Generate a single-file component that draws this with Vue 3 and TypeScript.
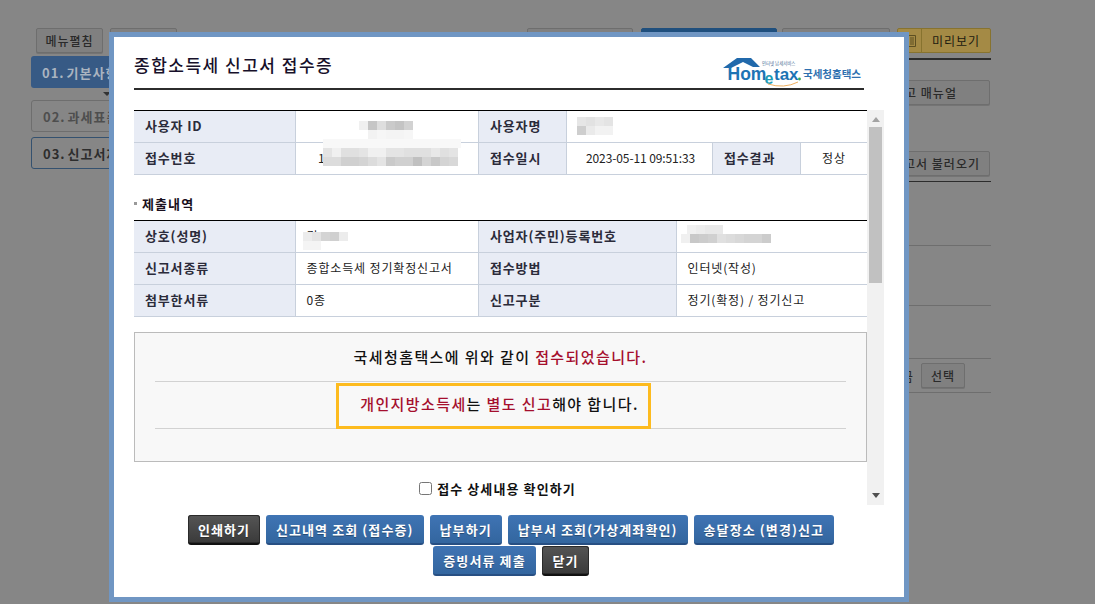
<template>
  <div class="page">
    <div class="backdrop">
      <aside class="side">
        <div class="side-top">
          <button class="ghost">메뉴펼침</button>
          <button class="ghost">메뉴닫기</button>
        </div>
        <div class="step current">01. 기본사항</div>
        <div class="step-arrow"></div>
        <div class="step muted">02. 과세표준</div>
        <div class="step outlined">03. 신고서제출</div>
      </aside>
      <section class="main">
        <div class="main-top">
          <button class="ghost top-a">저장하기</button>
          <button class="ghost top-b">신고서 제출하기</button>
          <button class="ghost top-c">임시저장</button>
          <button class="preview">
            <span class="preview-icon">
              <svg width="8" height="12" viewBox="0 0 8 12">
                <path d="M.5.5h7v11h-7z" fill="none" stroke="#5d4f22" />
                <path d="M2 3h4M2 5h4M2 7h4M2 9h4" stroke="#5d4f22" />
              </svg>
            </span>
            <span class="preview-label">미리보기</span>
          </button>
        </div>
        <div class="manual-row"><button class="ghost manual">신고 매뉴얼</button></div>
        <div class="load-row"><button class="ghost load">신고서 불러오기</button></div>
        <div class="plain-row r1"></div>
        <div class="plain-row r2"></div>
        <div class="plain-row r3"></div>
        <div class="select-row"><span class="select-text">세금</span><button class="ghost pick">선택</button></div>
      </section>
    </div>

    <div class="modal">
      <header class="modal-head">
        <h1>종합소득세 신고서 접수증</h1>
        <svg class="logo" width="140" height="32" viewBox="0 0 140 32">
          <path d="M1 11 L15 1 H29 L38 10 H31 L21 5 L9 11 Z" fill="#2169ab" />
          <text x="5.5" y="23" class="logo-home">Hom</text>
          <text x="42.5" y="27" class="logo-e">e</text>
          <text x="52" y="23" class="logo-tax">tax</text>
          <circle cx="77.5" cy="22" r="1.4" fill="#3aa655" />
          <path d="M46 27 Q62 32 76 25" fill="none" stroke="#efb060" stroke-width="1" />
          <text x="40" y="8" class="logo-tiny">인터넷 납세서비스</text>
          <text x="81" y="21" class="logo-kr">국세청홈택스</text>
        </svg>
      </header>

      <div class="scroll-wrap">
        <div class="scroll-body">
          <table class="info">
            <colgroup>
              <col style="width: 162px" /><col style="width: 183px" /><col style="width: 88px" />
              <col style="width: 146px" /><col style="width: 88px" /><col style="width: 66px" />
            </colgroup>
            <tbody>
              <tr>
                <th>사용자 ID</th>
                <td></td>
                <th>사용자명</th>
                <td colspan="3"></td>
              </tr>
              <tr>
                <th>접수번호</th>
                <td class="receipt">1</td>
                <th>접수일시</th>
                <td class="center date">2023-05-11 09:51:33</td>
                <th>접수결과</th>
                <td class="center">정상</td>
              </tr>
            </tbody>
          </table>

          <h2 class="section-title"><i></i>제출내역</h2>

          <table class="info">
            <colgroup>
              <col style="width: 162px" /><col style="width: 183px" /><col style="width: 198px" /><col style="width: 190px" />
            </colgroup>
            <tbody>
              <tr>
                <th>상호(성명)</th>
                <td>김</td>
                <th>사업자(주민)등록번호</th>
                <td></td>
              </tr>
              <tr>
                <th>신고서종류</th>
                <td>종합소득세 정기확정신고서</td>
                <th>접수방법</th>
                <td>인터넷(작성)</td>
              </tr>
              <tr>
                <th>첨부한서류</th>
                <td>0종</td>
                <th>신고구분</th>
                <td>정기(확정) / 정기신고</td>
              </tr>
            </tbody>
          </table>

          <div class="result">
            <p class="result-line first">국세청홈택스에 위와 같이&nbsp;<em>접수되었습니다.</em></p>
            <div class="result-line second">
              <p class="highlight"><em>개인지방소득세</em>는&nbsp;<em>별도 신고</em>해야 합니다.</p>
            </div>
          </div>

          <label class="detail-check">
            <input type="checkbox" />
            <span>접수 상세내용 확인하기</span>
          </label>
        </div>

        <div class="scrollbar">
          <span class="arrow up"></span>
          <span class="thumb"></span>
          <span class="arrow down"></span>
        </div>
      </div>

      <div class="actions">
        <div class="action-row">
          <button class="btn dark print">인쇄하기</button>
          <button class="btn">신고내역 조회 (접수증)</button>
          <button class="btn">납부하기</button>
          <button class="btn">납부서 조회(가상계좌확인)</button>
          <button class="btn">송달장소 (변경)신고</button>
        </div>
        <div class="action-row">
          <button class="btn evidence">증빙서류 제출</button>
          <button class="btn dark close">닫기</button>
        </div>
      </div>
    </div>

    <!-- personal data is pixelated in the source -->
    <div
      v-for="(m, i) in mosaics"
      :key="i"
      class="mosaic"
      :style="{ left: m.x + 'px', top: m.y + 'px' }"
    >
      <div v-for="(row, r) in m.rows" :key="r" class="mosaic-row" :style="{ marginLeft: (m.indent?.[r] ?? 0) + 'px' }">
        <span
          v-for="(c, k) in row"
          :key="k"
          :style="{ width: (m.w ?? 9) + 'px', height: '9px', background: '#' + c + c + c }"
        ></span>
      </div>
    </div>
  </div>
</template>

<script setup lang="ts">
interface Mosaic {
  x: number
  y: number
  w?: number
  indent?: number[]
  rows: string[][]
}

const mosaics: Mosaic[] = [
  {
    x: 359,
    y: 121,
    indent: [0, 9],
    rows: [
      ['f0', 'c6', 'de', 'ca', 'c4', 'd2'],
      ['f2', 'f6', 'f4', 'f4', 'f6'],
    ],
  },
  { x: 323, y: 139, w: 138, rows: [['f8']] },
  {
    x: 323,
    y: 148,
    rows: [
      ['e4', 'f0', 'e0', 'e0', 'e4', 'f0', 'f0', 'e4', 'e4', 'e0', 'e0', 'e0', 'e8', 'e0', 'e4'],
      ['dc', 'dc', 'd0', 'd0', 'd4', 'dc', 'e4', 'ca', 'd0', 'd0', 'c0', 'd4', 'c8', 'd4', 'd8'],
    ],
  },
  {
    x: 577,
    y: 117,
    rows: [
      ['e6', 'e2', 'e8', 'e4'],
      ['ce', 'ea', 'f2', 'f2'],
    ],
  },
  {
    x: 303,
    y: 232,
    rows: [
      ['ec', 'e4', 'd4', 'd0', 'ec'],
      ['f4', 'f4'],
    ],
  },
  { x: 687, y: 225, rows: [['f0', 'ec', 'e8', 'e8']] },
  { x: 681, y: 234, rows: [['f0', 'c8', 'cc', 'd0', 'e0', 'dc', 'd8', 'd4', 'd4', 'cc']] },
]
</script>

<style>
html,
body {
  margin: 0;
  background: #868686;
}
</style>

<style scoped>
.page {
  position: relative;
  width: 1095px;
  height: 604px;
  overflow: hidden;
  background: #868686;
  font-family: "Noto Sans CJK KR", "Liberation Sans", sans-serif;
  font-size: 12px;
  color: #111;
}

button {
  font-family: inherit;
  cursor: pointer;
}

/* page behind the dialog */
.backdrop {
  display: flex;
  justify-content: space-between;
  padding: 28px 104px 0 31px;
}

.side {
  width: 240px;
}

.side-top {
  display: flex;
  gap: 7px;
  padding-left: 5px;
  margin-bottom: 3px;
}

.ghost {
  height: 25px;
  padding: 0;
  border: 1px solid #6e6e6e;
  border-radius: 2px;
  background: #808080;
  color: #2a2a2a;
  font-size: 12px;
  letter-spacing: 1px;
  font-weight: 500;
  box-shadow: 0 1px 0 #747474;
}

.side-top .ghost {
  width: 67px;
}

.step {
  display: flex;
  align-items: center;
  height: 32px;
  padding-left: 11px;
  box-sizing: border-box;
  border-radius: 3px;
  font-size: 13px;
  font-weight: 700;
  letter-spacing: 1px;
  word-spacing: -2px;
}

.step.current {
  background: #375a85;
  color: #aab4c0;
}

.step-arrow {
  width: 0;
  height: 0;
  margin: 4px 0 4px 72px;
  border-left: 4px solid transparent;
  border-right: 4px solid transparent;
  border-top: 4px solid #333;
}

.step.muted {
  border: 1px solid #6e6e6e;
  color: #4e4e4e;
  margin-bottom: 5px;
}

.step.outlined {
  border: 1px solid #34516f;
  color: #2d2d2d;
}

.main {
  width: 464px;
}

.main-top {
  display: flex;
  height: 30px;
  border-bottom: 2px solid #2c2c2c;
}

.top-a {
  width: 106px;
}

.top-b {
  width: 136px;
  margin-left: 8px;
  background: #1f4f7d;
  border-color: #1f4f7d;
  color: #93a4b4;
}

.top-c {
  width: 108px;
  margin-left: 5px;
}

.preview {
  display: flex;
  width: 94px;
  height: 25px;
  margin-left: 7px;
  padding: 0;
  border: 1px solid #87732f;
  border-radius: 2px;
  background: #a48a45;
  color: #1c1a10;
  font-size: 12px;
  letter-spacing: 1px;
  font-weight: 400;
}

.preview-icon {
  display: flex;
  align-items: center;
  justify-content: flex-end;
  box-sizing: border-box;
  width: 24px;
  height: 100%;
  padding-right: 5px;
  border-right: 1px solid #87732f;
}

.preview-label {
  flex: 1;
  line-height: 23px;
}

.manual-row {
  display: flex;
  justify-content: flex-end;
  padding: 20px 1px 0 0;
}

.load-row {
  display: flex;
  justify-content: flex-end;
  padding: 46px 1px 5px 0;
  border-bottom: 1px solid #2c2c2c;
}

.manual {
  width: 130px;
}

.load {
  width: 108px;
}

.plain-row {
  border-bottom: 1px solid #6e6e6e;
}

.r1 {
  height: 63px;
}

.r2 {
  height: 59px;
}

.r3 {
  height: 52px;
}

.select-row {
  display: flex;
  justify-content: flex-end;
  align-items: center;
  gap: 8px;
  height: 33px;
  padding-right: 26px;
  border-bottom: 1px solid #6e6e6e;
  color: #2a2a2a;
}

.select-text {
  font-size: 13px;
}

.pick {
  width: 44px;
}

/* dialog */
.modal {
  position: absolute;
  left: 109px;
  top: 32px;
  width: 790px;
  height: 560px;
  border: 5px solid #7096c3;
  background: #fff;
}

.modal-head {
  position: relative;
  display: flex;
  align-items: flex-end;
  justify-content: space-between;
  box-sizing: border-box;
  width: 730px;
  height: 53px;
  margin-left: 20px;
  border-bottom: 2px solid #2c2c2c;
}

.modal-head h1 {
  margin: 0 0 11px;
  font-size: 17px;
  font-weight: 500;
  letter-spacing: 1.5px;
  line-height: 24px;
  color: #17102a;
}

.logo {
  margin: 0 2px -1px 0;
}

.logo-home,
.logo-tax {
  font-family: "Liberation Sans", sans-serif;
  font-weight: 700;
  font-size: 17.5px;
  fill: #1d74b4;
}

.logo-tax {
  font-size: 17px;
}

.logo-e {
  font-family: "Liberation Sans", sans-serif;
  font-weight: 700;
  font-size: 16px;
  fill: #1e9bb5;
}

.logo-tiny {
  font-size: 4.4px;
  fill: #4a6f96;
}

.logo-kr {
  font-size: 10.5px;
  font-weight: 700;
  fill: #2f70b0;
}

.scroll-wrap {
  display: flex;
  height: 395px;
  margin: 20px 0 0 20px;
}

.scroll-body {
  width: 733px;
  overflow: hidden;
}

.info {
  width: 733px;
  table-layout: fixed;
  border-collapse: separate;
  border-spacing: 0;
  border-top: 1px solid #000;
}

.info th,
.info td {
  height: 29px;
  padding: 0 0 2px;
  border-right: 1px solid #c8d0dc;
  border-bottom: 1px solid #c8d0dc;
  font-size: 12px;
  letter-spacing: 0.85px;
  box-sizing: content-box;
}

.info tr > :last-child {
  border-right: 0;
}

.info th {
  padding-left: 11px;
  background: #e8ecf5;
  color: #2b2b3a;
  font-size: 13px;
  font-weight: 700;
  text-align: left;
}

.info td {
  padding-left: 10.5px;
  color: #222;
}

.info td.center {
  padding-left: 0;
  text-align: center;
}

.info td.date {
  letter-spacing: -0.1px;
  padding-left: 2px;
}

.info td.receipt {
  padding-left: 22px;
}

.section-title {
  display: flex;
  align-items: center;
  gap: 5px;
  height: 45px;
  margin: 0;
  padding-top: 12px;
  box-sizing: border-box;
  font-size: 13px;
  font-weight: 700;
  letter-spacing: 1.1px;
  color: #1a1020;
}

.section-title i {
  width: 3px;
  height: 3px;
  background: #999;
}

.result {
  box-sizing: border-box;
  width: 733px;
  height: 130px;
  margin-top: 15px;
  padding: 0 20px;
  border: 1px solid #bbb;
  background: #f8f8f8;
  font-size: 15px;
  font-weight: 500;
  letter-spacing: 1.4px;
  color: #111;
}

.result em {
  font-style: normal;
  color: #a50f2d;
}

.result-line {
  margin: 0;
  border-bottom: 1px solid #d2d2d2;
}

.result-line.first {
  height: 48px;
  line-height: 48px;
  text-align: center;
}

.result-line.second {
  display: flex;
  justify-content: center;
  height: 46px;
  box-sizing: content-box;
}

.highlight {
  box-sizing: border-box;
  flex: none;
  width: 315px;
  height: 46px;
  margin: 1px 0 0 -14px;
  padding-left: 12px;
  border: 3px solid #fdbb1f;
  line-height: 36px;
  text-align: center;
  white-space: nowrap;
}

.detail-check {
  display: flex;
  align-items: center;
  justify-content: center;
  gap: 5px;
  height: 52px;
  padding-right: 6px;
  font-size: 13px;
  font-weight: 700;
  letter-spacing: 1.1px;
  color: #111;
}

.detail-check input {
  width: 13px;
  height: 13px;
  margin: 0;
}

.scrollbar {
  position: relative;
  display: flex;
  flex-direction: column;
  align-items: center;
  width: 17px;
  background: #f1f1f1;
}

.thumb {
  width: 13px;
  height: 156px;
  margin-top: 5px;
  background: #c1c1c1;
}

.arrow {
  width: 0;
  height: 0;
  border-left: 4px solid transparent;
  border-right: 4px solid transparent;
}

.arrow.up {
  margin-top: 7px;
  border-bottom: 5px solid #a3a3a3;
}

.arrow.down {
  margin-top: auto;
  margin-bottom: 7px;
  border-top: 5px solid #505050;
}

.actions {
  display: flex;
  flex-direction: column;
  gap: 1px;
  margin-top: 10px;
  padding-left: 4px;
}

.action-row {
  display: flex;
  justify-content: center;
  gap: 6px;
}

.btn {
  height: 30px;
  padding: 0 10px;
  border: 0;
  border-bottom: 2px solid #274f83;
  border-radius: 3px;
  background: linear-gradient(#3f74b4, #33669f);
  color: #fff;
  font-size: 13px;
  font-weight: 700;
  letter-spacing: 1.1px;
  white-space: nowrap;
  text-shadow: 0 1px 0 rgba(0, 0, 0, 0.3);
}

.btn.dark {
  background: linear-gradient(#555, #3a3a3a);
  border-bottom-color: #111;
  box-shadow: inset 0 0 0 1px #2a2a2a;
}

.print {
  width: 72px;
}

.evidence {
  width: 103px;
}

.close {
  width: 47px;
}

.mosaic {
  position: absolute;
}

.mosaic-row {
  display: flex;
}

.mosaic-row span {
  display: block;
}
</style>
